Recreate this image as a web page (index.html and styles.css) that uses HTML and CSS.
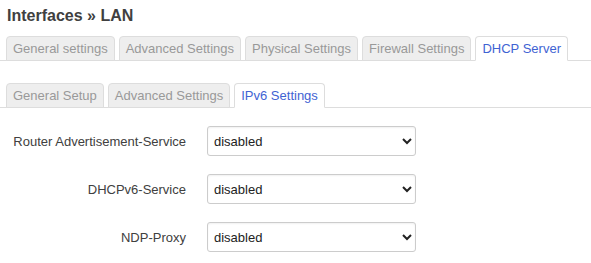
FILE: index.html
```html
<!DOCTYPE html>
<html>
<head>
<meta charset="utf-8">
<link rel="stylesheet" href="styles.css">
</head>
<body>
<h2 class="title">Interfaces » LAN</h2>
<ul class="tabs main-tabs">
  <li class="tab">General settings</li>
  <li class="tab">Advanced Settings</li>
  <li class="tab">Physical Settings</li>
  <li class="tab">Firewall Settings</li>
  <li class="tab active">DHCP Server</li>
</ul>
<ul class="tabs sub-tabs">
  <li class="tab">General Setup</li>
  <li class="tab">Advanced Settings</li>
  <li class="tab active">IPv6 Settings</li>
</ul>
<div class="form">
  <div class="row">
    <label class="label">Router Advertisement-Service</label>
    <select class="select"><option>disabled</option></select>
  </div>
  <div class="row">
    <label class="label">DHCPv6-Service</label>
    <select class="select"><option>disabled</option></select>
  </div>
  <div class="row">
    <label class="label">NDP-Proxy</label>
    <select class="select"><option>disabled</option></select>
  </div>
</div>
</body>
</html>
```

FILE: styles.css
```css
html, body {
  margin: 0;
  padding: 0;
  background: #fff;
}
body {
  font-family: "Liberation Sans", Arial, sans-serif;
  font-size: 13px;
  color: #404040;
}
.title {
  margin: 0;
  padding: 6px 0 0 7px;
  font-size: 16px;
  line-height: 20px;
  font-weight: bold;
  color: #404040;
}
.tabs {
  list-style: none;
  margin: 0;
  padding: 0 0 0 6px;
  display: flex;
  border-bottom: 1px solid #ddd;
}
.main-tabs {
  margin-top: 10px;
}
.sub-tabs {
  margin-top: 22px;
}
.tab {
  height: 23px;
  line-height: 23px;
  padding: 0 6px;
  margin-right: 4px;
  margin-bottom: -1px;
  border: 1px solid #ddd;
  border-bottom: 1px solid #ddd;
  border-radius: 4px 4px 0 0;
  background: #eee;
  color: #999;
  white-space: nowrap;
}
.tab.active {
  background: #fff;
  color: #3f63d3;
  border-bottom-color: #fff;
}
.form {
  padding-top: 18px;
}
.row {
  display: flex;
  align-items: center;
  height: 30px;
  margin-bottom: 18px;
}
.label {
  width: 186px;
  text-align: right;
  padding-right: 21px;
  box-sizing: content-box;
  color: #404040;
}
.select {
  width: 209px;
  height: 30px;
  box-sizing: border-box;
  border: 1px solid #ccc;
  border-radius: 3px;
  background: #fff;
  font-family: "Liberation Sans", Arial, sans-serif;
  font-size: 13px;
  color: #222;
  padding: 0 2px;
  box-shadow: inset 0 1px 2px rgba(0,0,0,0.06);
}
```
